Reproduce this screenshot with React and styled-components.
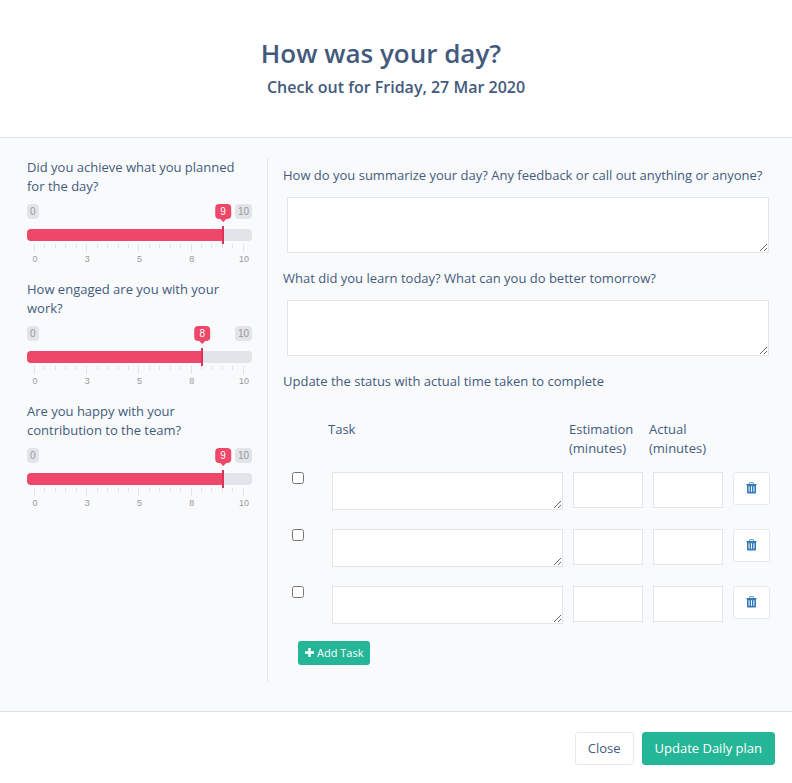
import React, { useState } from 'react';
import styled, { createGlobalStyle } from 'styled-components';

const questions = [
    { id: 'achieved', label: 'Did you achieve what you planned for the day?', value: 9 },
    { id: 'engaged', label: 'How engaged are you with your work?', value: 8 },
    { id: 'happy', label: 'Are you happy with your contribution to the team?', value: 9 },
];

const ticks = Array.from({ length: 21 }, (_, i) => i);
const scale = [0, 3, 5, 8, 10];

function RatingSlider({ id, label, initial }) {
    const [value, setValue] = useState(initial);

    return (
        <Rating>
            <Label htmlFor={id}>{label}</Label>
            <Slider style={{ '--value': value / 10 }}>
                <Limits>
                    <Limit>0</Limit>
                    <Limit>10</Limit>
                    <Bubble>{value}</Bubble>
                </Limits>
                <Range
                    id={id}
                    type="range"
                    min="0"
                    max="10"
                    value={value}
                    onChange={(e) => setValue(Number(e.target.value))}
                />
                <Ticks>
                    {ticks.map((tick) => (
                        <Tick key={tick} $major={tick % 5 === 0} />
                    ))}
                </Ticks>
                <Scale>
                    {scale.map((number) => (
                        <span key={number}>{number}</span>
                    ))}
                </Scale>
            </Slider>
        </Rating>
    )
}

function TrashIcon() {
    return (
        <svg width="11" height="12" viewBox="0 0 11 12" aria-hidden="true">
            <path d="M3.5 2V1.2Q3.5 0.6 4.1 0.6H6.9Q7.5 0.6 7.5 1.2V2" fill="none" stroke="currentColor" strokeWidth="0.8" />
            <path
                fill="currentColor"
                fillRule="evenodd"
                d="M1 2H10Q10.6 2 10.6 2.5V3.3H10V10.5Q10 11.5 9 11.5H2Q1 11.5 1 10.5V3.3H0.4V2.5Q0.4 2 1 2ZM2.6 4.2V9.8H3.6V4.2ZM5 4.2V9.8H6V4.2ZM7.4 4.2V9.8H8.4V4.2Z"
            />
        </svg>
    )
}

function PlusIcon() {
    return (
        <svg width="9" height="9" viewBox="0 0 9 9" aria-hidden="true">
            <path d="M4.5 1.2V7.8M1.2 4.5H7.8" stroke="currentColor" strokeWidth="2.4" strokeLinecap="square" />
        </svg>
    )
}

export default function App() {
    const [tasks, setTasks] = useState([1, 2, 3]);

    const addTask = () => setTasks([...tasks, Math.max(0, ...tasks) + 1]);
    const removeTask = (id) => setTasks(tasks.filter((task) => task !== id));

    return (
        <Page>
            <GlobalStyle />
            <Header>
                <Title>How was your day?</Title>
                <Subtitle>Check out for Friday, 27 Mar 2020</Subtitle>
            </Header>
            <Body>
                <Ratings>
                    {questions.map((q) => (
                        <RatingSlider key={q.id} id={q.id} label={q.label} initial={q.value} />
                    ))}
                </Ratings>
                <Details>
                    <Field>
                        <Label htmlFor="summary">How do you summarize your day? Any feedback or call out anything or anyone?</Label>
                        <Notes id="summary" />
                    </Field>
                    <Field>
                        <Label htmlFor="learned">What did you learn today? What can you do better tomorrow?</Label>
                        <Notes id="learned" />
                    </Field>
                    <Text>Update the status with actual time taken to complete</Text>
                    <TaskTable>
                        <thead>
                            <tr>
                                <HeadCell $width="44px" />
                                <HeadCell>Task</HeadCell>
                                <HeadCell $width="80px">Estimation (minutes)</HeadCell>
                                <HeadCell $width="80px">Actual (minutes)</HeadCell>
                                <HeadCell $width="47px" />
                            </tr>
                        </thead>
                        <tbody>
                            {tasks.map((task) => (
                                <tr key={task}>
                                    <CheckCell>
                                        <Checkbox type="checkbox" aria-label="Done" />
                                    </CheckCell>
                                    <Cell><TaskName aria-label="Task" /></Cell>
                                    <Cell><Minutes aria-label="Estimation (minutes)" /></Cell>
                                    <Cell><Minutes aria-label="Actual (minutes)" /></Cell>
                                    <Cell>
                                        <DeleteButton type="button" aria-label="Delete task" onClick={() => removeTask(task)}>
                                            <TrashIcon />
                                        </DeleteButton>
                                    </Cell>
                                </tr>
                            ))}
                        </tbody>
                    </TaskTable>
                    <AddButton type="button" onClick={addTask}>
                        <PlusIcon />
                        Add Task
                    </AddButton>
                </Details>
            </Body>
            <Footer>
                <Button type="button">Close</Button>
                <Button type="button" $primary>Update Daily plan</Button>
            </Footer>
        </Page>
    )
}

const GlobalStyle = createGlobalStyle`
* {
    box-sizing: border-box;
}
body {
    margin: 0;
    background: #fff;
    color: #435a7d;
    font-family: "Open Sans", sans-serif;
    font-size: 13px;
    line-height: 19px;
}
button, input, textarea {
    font: inherit;
    color: inherit;
}
`;

const Page = styled.div`
background: #fff;
`;

const Header = styled.header`
padding: 35px 15px 39px;
text-align: center;
border-bottom: 1px solid #dee1e4;
`;

const Title = styled.h1`
margin: 0;
padding-right: 30px;
font-size: 26px;
font-weight: 600;
line-height: 36px;
`;

const Subtitle = styled.h2`
margin: 5px 0 0;
font-size: 16px;
font-weight: 600;
line-height: 22px;
`;

const Body = styled.main`
display: grid;
grid-template-columns: 1fr 2fr;
padding: 20px 15px 29px 12px;
background: #f9fafc;
border-bottom: 1px solid #dee1e4;
`;

const Ratings = styled.section`
display: flex;
flex-direction: column;
gap: 14px;
padding: 0 15px;
`;

const Rating = styled.div`
display: flex;
flex-direction: column;
gap: 8px;
`;

const Label = styled.label`
display: block;
`;

const Text = styled.p`
margin: 0;
`;

const Slider = styled.div`
font-family: "Liberation Sans", Arial, sans-serif;
font-size: 10px;
line-height: 13px;
color: #999;
`;

const Limits = styled.div`
position: relative;
display: flex;
justify-content: space-between;
`;

const Limit = styled.span`
padding: 1px 3px;
background: #e1e4e9;
border-radius: 4px;
`;

/* sits over the limits, centred on the handle */
const Bubble = styled.output`
position: absolute;
top: 0;
left: calc(8px + (100% - 16px) * var(--value));
padding: 1px 5px;
color: #fff;
background: #ee4769;
border-radius: 4px;
transform: translateX(-50%);
&::after {
    content: "";
    position: absolute;
    top: 100%;
    left: 50%;
    margin-left: -3px;
    border: 3px solid transparent;
    border-top-color: #ee4769;
}
`;

const Range = styled.input`
appearance: none;
display: block;
width: 100%;
height: 18px;
margin: 7px 0 0;
background: none;
cursor: pointer;
&::-webkit-slider-runnable-track {
    height: 12px;
    border-radius: 4px;
    background: linear-gradient(#ee4769, #ee4769) no-repeat #e1e4e9;
    background-size: calc(8px + (100% - 16px) * var(--value)) 100%;
}
&::-webkit-slider-thumb {
    appearance: none;
    width: 16px;
    height: 18px;
    margin-top: -3px;
    background: linear-gradient(#da3358, #da3358) center / 2px 100% no-repeat;
}
`;

const Ticks = styled.div`
display: flex;
justify-content: space-between;
height: 8px;
padding: 0 8px 0 7px;
`;

const Tick = styled.span`
width: 1px;
height: ${({ $major }) => ($major ? '8px' : '4px')};
background: #e1e4e9;
`;

const Scale = styled.div`
display: flex;
justify-content: space-between;
padding-top: 1px;
font-size: 9px;
span {
    width: 16px;
    text-align: center;
}
`;

const Details = styled.section`
padding: 8px 2px 17px 15px;
border-left: 1px solid #e5e7ea;
`;

const Field = styled.div`
margin-bottom: 16px;
`;

const Notes = styled.textarea`
display: block;
width: calc(100% - 10px);
height: 56px;
margin: 12px 4px 0;
padding: 6px 12px;
background: #fff;
border: 1px solid #e3e5e7;
`;

const TaskTable = styled.table`
width: 100%;
margin: 29px 0 0;
border-spacing: 0;
table-layout: fixed;
`;

const HeadCell = styled.th`
width: ${({ $width }) => $width || 'auto'};
padding: 0 1px 14px;
font-weight: 400;
text-align: left;
vertical-align: top;
`;

const Cell = styled.td`
padding: 0 5px 19px;
vertical-align: top;
`;

const CheckCell = styled(Cell)`
padding-left: 9px;
`;

const Checkbox = styled.input`
display: block;
width: 12px;
height: 12px;
margin: 0;
`;

const TaskName = styled.textarea`
display: block;
width: 100%;
height: 38px;
padding: 6px 12px;
background: #fff;
border: 1px solid #e3e5e7;
`;

const Minutes = styled.input`
display: block;
width: 100%;
height: 36px;
padding: 6px 12px;
background: #fff;
border: 1px solid #e3e5e7;
`;

const Button = styled.button`
height: 33px;
padding: 0 12px;
color: ${({ $primary }) => ($primary ? '#fff' : 'inherit')};
background: ${({ $primary }) => ($primary ? '#24b696' : '#fff')};
border: 1px solid ${({ $primary }) => ($primary ? '#24b696' : '#e7eaec')};
border-radius: 3px;
cursor: pointer;
`;

const DeleteButton = styled(Button)`
display: flex;
align-items: center;
justify-content: center;
width: 37px;
padding: 0 0 1px;
color: #337ab7;
`;

const AddButton = styled.button`
display: flex;
align-items: center;
gap: 3px;
height: 24px;
margin: -2px 15px 0;
padding: 0 7px 1px;
color: #fff;
font-size: 11px;
background: #24b696;
border: 0;
border-radius: 3px;
cursor: pointer;
`;

const Footer = styled.footer`
display: flex;
justify-content: flex-end;
gap: 8px;
padding: 20px 17px 18px;
`;
